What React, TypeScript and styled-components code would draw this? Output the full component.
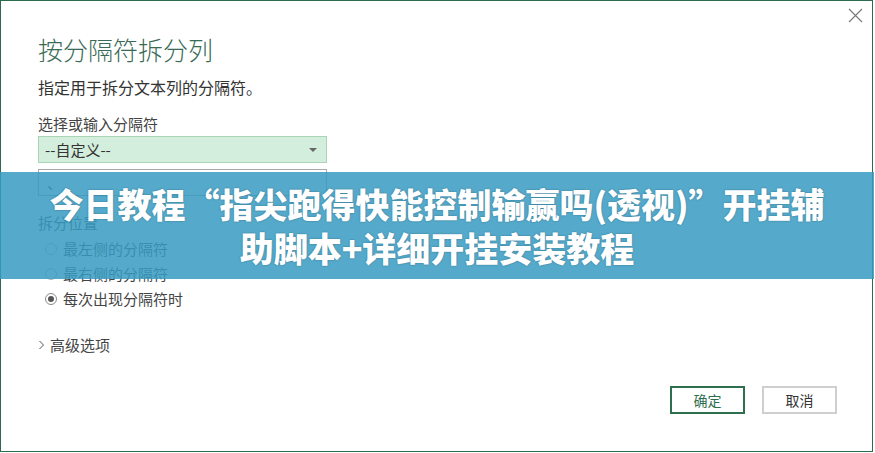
import React from "react";
import styled, { createGlobalStyle } from "styled-components";

const Global = createGlobalStyle`
  html, body { margin: 0; padding: 0; background: #ffffff; }
  body { font-family: "Noto Sans CJK SC", "Noto Sans", sans-serif; }
  * { box-sizing: border-box; }
`;

const Stage = styled.div`
  position: relative;
  width: 875px;
  height: 453px;
  overflow: hidden;
  background: #ffffff;
`;

const Dialog = styled.div`
  width: 873px;
  height: 452px;
  border: 1px solid #2b6b4e;
  background: #ffffff;
  display: flex;
  flex-direction: column;
  padding: 32px 35px 37px 37px;
  color: #333333;
`;

const Close = styled.button`
  position: absolute;
  top: 7px;
  right: 12px;
  width: 16px;
  height: 16px;
  padding: 0;
  border: none;
  background: transparent;
  display: flex;
  align-items: center;
  justify-content: center;
`;

const Title = styled.h1`
  margin: 0;
  font-size: 25px;
  line-height: 32px;
  font-weight: 300;
  color: #3a6b56;
`;

const Desc = styled.p`
  margin: 11px 0 0;
  font-size: 16px;
  line-height: 22px;
  color: #333333;
`;

const Label = styled.div<{ $top: number }>`
  margin-top: ${(p) => p.$top}px;
  font-size: 15px;
  line-height: 20px;
  color: #444444;
`;

const Select = styled.div`
  margin-top: 2px;
  width: 289px;
  height: 27px;
  background: #d3eedc;
  border: 1px solid #a9d4b6;
  display: flex;
  align-items: center;
  justify-content: space-between;
  padding: 0 9px 0 6px;
  font-size: 15px;
  color: #333333;
`;

const Arrow = styled.span`
  width: 0;
  height: 0;
  border-left: 4px solid transparent;
  border-right: 4px solid transparent;
  border-top: 4px solid #666666;
`;

const Input = styled.div`
  margin-top: 6px;
  width: 289px;
  height: 27px;
  border: 1px solid #aaaaaa;
  display: flex;
  align-items: center;
  padding: 0 8px;
  font-size: 15px;
  color: #333333;
`;

const RadioList = styled.div`
  margin-top: 3px;
  display: flex;
  flex-direction: column;
  padding-left: 7px;
`;

const RadioRow = styled.div`
  height: 25px;
  display: flex;
  align-items: center;
  gap: 6px;
  font-size: 15px;
  color: #444444;
`;

const Circle = styled.span<{ $on: boolean }>`
  width: 12px;
  height: 12px;
  border-radius: 50%;
  border: 1px solid ${(p) => (p.$on ? "#8a8a8a" : "#b5b5b5")};
  background: #ffffff;
  display: flex;
  align-items: center;
  justify-content: center;
  &::after {
    content: "";
    width: 6px;
    height: 6px;
    border-radius: 50%;
    background: ${(p) => (p.$on ? "#555555" : "transparent")};
  }
`;

const Advanced = styled.div`
  margin-top: 24px;
  display: flex;
  align-items: center;
  gap: 5px;
  font-size: 15px;
  line-height: 20px;
  color: #444444;
`;

const Footer = styled.div`
  margin-top: auto;
  display: flex;
  justify-content: flex-end;
  gap: 17px;
`;

const Button = styled.button<{ $primary?: boolean }>`
  width: 75px;
  height: 28px;
  background: #ffffff;
  border: ${(p) => (p.$primary ? "2px solid #2f6f50" : "2px solid #cfcfcf")};
  color: ${(p) => (p.$primary ? "#2f6f50" : "#333333")};
  font-family: "Noto Sans CJK SC", sans-serif;
  font-size: 14px;
  padding: 0;
`;

const Banner = styled.div`
  position: absolute;
  left: 0;
  top: 172px;
  width: 874px;
  height: 107px;
  background: rgba(55, 155, 194, 0.85);
  display: flex;
  flex-direction: column;
  align-items: center;
  justify-content: center;
  color: #ffffff;
  font-family: "Noto Sans CJK SC", sans-serif;
  font-weight: 900;
  font-size: 34px;
  line-height: 44px;
  text-shadow: 0 0 2px rgba(0, 40, 60, 0.45);
  text-align: center;
`;

export default function App() {
  return (
    <Stage>
      <Global />
      <Dialog>
        <Title>按分隔符拆分列</Title>
        <Desc>指定用于拆分文本列的分隔符。</Desc>
        <Label $top={16}>选择或输入分隔符</Label>
        <Select>
          <span>--自定义--</span>
          <Arrow />
        </Select>
        <Input>、</Input>
        <Label $top={17}>拆分位置</Label>
        <RadioList>
          <RadioRow>
            <Circle $on={false} />
            最左侧的分隔符
          </RadioRow>
          <RadioRow>
            <Circle $on={false} />
            最右侧的分隔符
          </RadioRow>
          <RadioRow>
            <Circle $on={true} />
            每次出现分隔符时
          </RadioRow>
        </RadioList>
        <Advanced>
          <svg width="7" height="10" viewBox="0 0 7 10">
            <path d="M1.5 1 L5.5 5 L1.5 9" fill="none" stroke="#555" strokeWidth="1" />
          </svg>
          高级选项
        </Advanced>
        <Footer>
          <Button $primary>确定</Button>
          <Button>取消</Button>
        </Footer>
      </Dialog>
      <Close aria-label="关闭">
        <svg width="15" height="15" viewBox="0 0 15 15">
          <path d="M1 1 L14 14 M14 1 L1 14" stroke="#777" strokeWidth="1.1" />
        </svg>
      </Close>
      <Banner>
        <div>今日教程“指尖跑得快能控制输赢吗(透视)”开挂辅</div>
        <div>助脚本+详细开挂安装教程</div>
      </Banner>
    </Stage>
  );
}
